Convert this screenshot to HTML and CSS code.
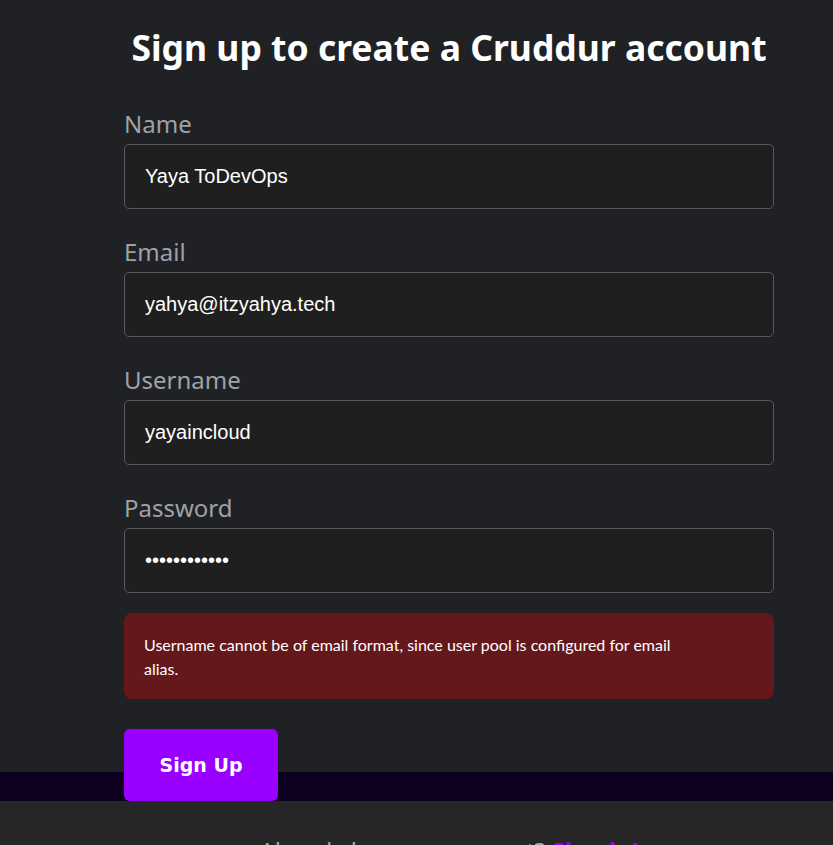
FILE: index.html
```html
<!DOCTYPE html>
<html lang="en">
<head>
<meta charset="utf-8">
<title>Sign up - Cruddur</title>
<link rel="stylesheet" href="styles.css">
</head>
<body>
<main class="signup">
  <form class="signup-form">
    <h2 class="title">Sign up to create a Cruddur account</h2>
    <div class="field">
      <label class="label" for="name">Name</label>
      <input class="input" id="name" type="text" value="Yaya ToDevOps">
    </div>
    <div class="field">
      <label class="label" for="email">Email</label>
      <input class="input" id="email" type="text" value="yahya@itzyahya.tech">
    </div>
    <div class="field">
      <label class="label" for="username">Username</label>
      <input class="input" id="username" type="text" value="yayaincloud">
    </div>
    <div class="field field-last">
      <label class="label" for="password">Password</label>
      <input class="input" id="password" type="password" value="yayaincloud1">
    </div>
    <div class="errors"><p class="errors-text">Username cannot be of email format, since user pool is configured for email alias.</p></div>
    <div class="submit">
      <button class="btn" type="button">Sign Up</button>
    </div>
  </form>
</main>
<footer class="already">
  <p class="already-text">Already have an account? <a class="link" href="#">Sign in!</a></p>
</footer>
</body>
</html>
```
FILE: styles.css
```css
html, body {
  margin: 0;
  padding: 0;
}
body {
  background: #262626;
  font-family: "Noto Sans", "Open Sans", sans-serif;
}
.signup {
  background: #202124;
  border-bottom: 29px solid #0e0120;
}
.signup-form {
  width: 650px;
  margin-left: 124px;
  padding-top: 24px;
}
.title {
  margin: 0 -40px 38px;
  font-size: 35.5px;
  line-height: 46px;
  font-weight: 700;
  color: #ffffff;
  text-align: center;
}
.field {
  display: flex;
  flex-direction: column;
  margin-bottom: 27px;
}
.field-last {
  margin-bottom: 20px;
}
.label {
  font-size: 24px;
  line-height: 32px;
  color: #9ea1a6;
  margin-bottom: 4px;
}
.input {
  box-sizing: border-box;
  height: 65px;
  padding: 0 20px;
  background: #1f1f1f;
  border: 1px solid #58595c;
  border-radius: 5px;
  color: #ffffff;
  font-family: "Liberation Sans", Arial, sans-serif;
  font-size: 20px;
  outline: none;
}
.errors {
  background: #64181b;
  border-radius: 8px;
  padding: 20px 20px 18px;
}
.errors-text {
  margin: 0;
  max-width: 550px;
  font-family: Lato, "Noto Sans", sans-serif;
  font-size: 16px;
  line-height: 24px;
  color: #ffffff;
}
.submit {
  margin-top: 30px;
  margin-bottom: -29px;
}
.btn {
  width: 154px;
  height: 72px;
  border: 0;
  border-radius: 6px;
  background: #9900ff;
  color: #ffffff;
  font-family: "DejaVu Sans", sans-serif;
  font-weight: 700;
  font-size: 19px;
  cursor: pointer;
}
.already {
  width: 650px;
  margin-left: 124px;
  padding-top: 34px;
}
.already-text {
  margin: 0;
  text-align: center;
  font-size: 24px;
  line-height: 32px;
  color: #a8a8a8;
}
.link {
  color: #9900ff;
  text-decoration: none;
  font-weight: 700;
}
```
